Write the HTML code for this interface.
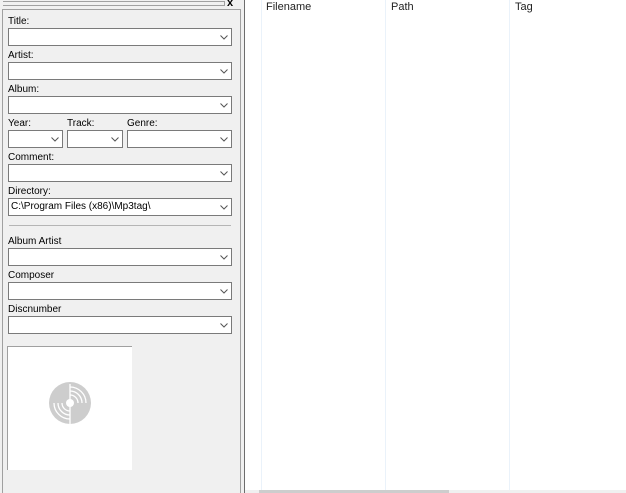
<!DOCTYPE html>
<html><head><style>
*{margin:0;padding:0;box-sizing:border-box}
body{width:626px;height:493px;overflow:hidden;background:#fff;font-family:"Liberation Sans",sans-serif;font-size:10px;color:#000;position:relative}
.a{position:absolute}
.lbl{position:absolute;left:8px;font-size:10px;line-height:12px}
.in{position:absolute;height:18px;background:#fff;border:1px solid #7a7a7a;font-size:10px;line-height:16px;padding-left:2px}
.in svg{position:absolute;right:3px;top:6px}
.hd{position:absolute;top:1px;font-size:11px;color:#222}
.col{position:absolute;top:0;width:1px;height:490px;background:#eaf2fa}
</style></head><body>
<div class="a" style="left:0;top:0;width:244px;height:493px;background:#f0f0f0"></div>
<div class="a" style="left:244px;top:0;width:1px;height:493px;background:#6d6d6d"></div>
<div class="a" style="left:3px;top:1px;width:222px;height:5px;border-top:1px solid #a0a0a0;border-bottom:1px solid #a0a0a0;border-right:1px solid #a0a0a0"></div>
<div class="a" style="left:227px;top:-3px;font-size:11px;font-weight:bold">x</div>
<div class="a" style="left:2px;top:9px;width:239px;height:484px;border-left:1px solid #a0a0a0;border-top:1px solid #a0a0a0;border-right:1px solid #a0a0a0"></div>

<div class="lbl" style="top:16px">Title:</div>
<div class="in" style="left:8px;top:28px;width:224px"><svg width="8" height="5"><path d="M0.5 0.5L4 4L7.5 0.5" fill="none" stroke="#555"/></svg></div>
<div class="lbl" style="top:50px">Artist:</div>
<div class="in" style="left:8px;top:62px;width:224px"><svg width="8" height="5"><path d="M0.5 0.5L4 4L7.5 0.5" fill="none" stroke="#555"/></svg></div>
<div class="lbl" style="top:84px">Album:</div>
<div class="in" style="left:8px;top:96px;width:224px"><svg width="8" height="5"><path d="M0.5 0.5L4 4L7.5 0.5" fill="none" stroke="#555"/></svg></div>
<div class="lbl" style="top:118px">Year:</div>
<div class="lbl" style="top:118px;left:67px">Track:</div>
<div class="lbl" style="top:118px;left:127px">Genre:</div>
<div class="in" style="left:8px;top:130px;width:55px"><svg width="8" height="5"><path d="M0.5 0.5L4 4L7.5 0.5" fill="none" stroke="#555"/></svg></div>
<div class="in" style="left:67px;top:130px;width:56px"><svg width="8" height="5"><path d="M0.5 0.5L4 4L7.5 0.5" fill="none" stroke="#555"/></svg></div>
<div class="in" style="left:127px;top:130px;width:105px"><svg width="8" height="5"><path d="M0.5 0.5L4 4L7.5 0.5" fill="none" stroke="#555"/></svg></div>
<div class="lbl" style="top:152px">Comment:</div>
<div class="in" style="left:8px;top:164px;width:224px"><svg width="8" height="5"><path d="M0.5 0.5L4 4L7.5 0.5" fill="none" stroke="#555"/></svg></div>
<div class="lbl" style="top:186px">Directory:</div>
<div class="in" style="left:8px;top:198px;width:224px">C:\Program Files (x86)\Mp3tag\<svg width="8" height="5"><path d="M0.5 0.5L4 4L7.5 0.5" fill="none" stroke="#555"/></svg></div>
<div class="a" style="left:9px;top:225px;width:222px;height:1px;background:#b5b5b5"></div>
<div class="lbl" style="top:236px">Album Artist</div>
<div class="in" style="left:8px;top:248px;width:224px"><svg width="8" height="5"><path d="M0.5 0.5L4 4L7.5 0.5" fill="none" stroke="#555"/></svg></div>
<div class="lbl" style="top:270px">Composer</div>
<div class="in" style="left:8px;top:282px;width:224px"><svg width="8" height="5"><path d="M0.5 0.5L4 4L7.5 0.5" fill="none" stroke="#555"/></svg></div>
<div class="lbl" style="top:304px">Discnumber</div>
<div class="in" style="left:8px;top:316px;width:224px"><svg width="8" height="5"><path d="M0.5 0.5L4 4L7.5 0.5" fill="none" stroke="#555"/></svg></div>

<div class="a" style="left:7px;top:346px;width:125px;height:124px;background:#fff;border-left:1px solid #a0a0a0;border-top:1px solid #a0a0a0"></div>
<svg class="a" style="left:49px;top:382px" width="42" height="42" viewBox="0 0 42 42">
<circle cx="21" cy="21" r="21" fill="#cdcdcd"/>
<g fill="none" stroke="#fff" stroke-width="1.3">
<path d="M21 13a8 8 0 0 1 8 8"/><path d="M21 9a12 12 0 0 1 12 12"/><path d="M21 5a16 16 0 0 1 16 16"/>
<path d="M21 29a8 8 0 0 1 -8 -8"/><path d="M21 33a12 12 0 0 1 -12 -12"/><path d="M21 37a16 16 0 0 1 -16 -16"/>
<path d="M21 2V42"/>
</g>
<circle cx="21" cy="21" r="4" fill="#fff"/>
</svg>

<div class="col" style="left:261px"></div>
<div class="col" style="left:385px"></div>
<div class="col" style="left:509px"></div>
<div class="hd" style="left:266px">Filename</div>
<div class="hd" style="left:391px">Path</div>
<div class="hd" style="left:515px">Tag</div>
<div class="a" style="left:245px;top:490px;width:381px;height:3px;background:#f0f0f0"></div>
<div class="a" style="left:259px;top:490px;width:190px;height:3px;background:#cdcdcd"></div>
</body></html>
